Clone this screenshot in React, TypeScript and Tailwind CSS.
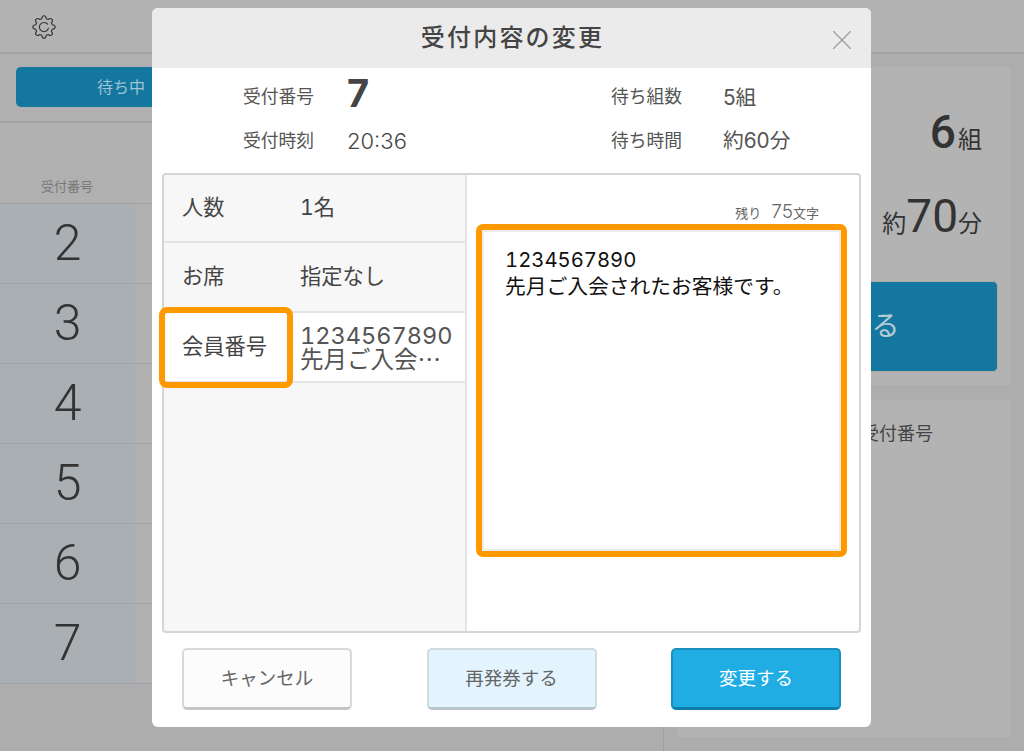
import { X } from "lucide-react";

const waiting = ["2", "3", "4", "5", "6", "7"];
const sans = "font-['Inter','Noto_Sans_CJK_JP',sans-serif]";
const roboto = "font-['Roboto','Noto_Sans_CJK_JP',sans-serif]";

// 8-tooth outline for the settings gear
const gearPath = Array.from({ length: 8 }, (_, i) => {
  const a = (i * Math.PI) / 4;
  const pt = (r: number, d: number) =>
    `${(12 + r * Math.sin(a + d)).toFixed(2)} ${(12 - r * Math.cos(a + d)).toFixed(2)}`;
  return `${i === 0 ? "M" : "L"}${pt(8.6, -0.26)} Q${pt(11.4, -0.16)} ${pt(11.2, 0)} Q${pt(11.4, 0.16)} ${pt(8.6, 0.26)}`;
}).join(" ") + " Z";

function GearIcon() {
  return (
    <svg width="24" height="24" viewBox="0 0 24 24" fill="none" stroke="#333" strokeWidth="1.1" strokeLinejoin="round">
      <path d={gearPath} />
      <path d="M15.6 9.2A4.6 4.6 0 1 0 16.4 13.4" strokeLinecap="round" />
    </svg>
  );
}

function InfoItem({ label, children }: { label: string; children: React.ReactNode }) {
  return (
    <div className="flex items-center">
      <span className="w-[104px] text-[17.75px] text-[#555]">{label}</span>
      {children}
    </div>
  );
}

function Row({ label, value, className }: { label: string; value: React.ReactNode; className: string }) {
  return (
    <div className={`flex items-center border-b-2 border-[#e4e4e4] pl-[18px] text-[21.25px] text-[#444] tabular-nums ${className}`}>
      <span className="w-[118px]">{label}</span>
      <span className="flex-1">{value}</span>
    </div>
  );
}

function Button({ className, children }: { className: string; children: React.ReactNode }) {
  return (
    <button className={`w-[170px] h-[62px] rounded-[5px] text-[18.5px] border-2 border-b-[3px] ${className}`}>
      {children}
    </button>
  );
}

export default function App() {
  return (
    <div className={`relative w-[1024px] h-[751px] overflow-hidden bg-[#adadad] text-[#333] ${sans}`}>
      <header className="h-[54px] flex items-center pl-[32px] pt-[2px] bg-[#b3b3b3] border-b-2 border-[#a3a3a3]">
        <GearIcon />
      </header>
      <div className="flex h-[697px]">
        <section className="w-[664px] border-r border-[#a0a0a0]">
          <div className="h-[69px] pl-4 pt-[13px] bg-[#b0b0b0] border-b-2 border-[#a3a3a3]">
            <div className="w-[280px] h-10 rounded-l-[5px] bg-[#14779f] pl-[81px] flex items-center text-[16px] text-[#9fc4d4]">待ち中</div>
          </div>
          <div className="h-[81px] flex items-end pb-[7px] pl-[41px] text-[13px] text-[#777] bg-[#b0b0b0] border-b border-[#a3a3a3]">受付番号</div>
          {waiting.map((n) => (
            <div key={n} className="h-20 bg-[#b0b0b0] border-b border-[#a0a3a7]">
              <div className={`w-[135px] h-full bg-[#a9afb3] flex items-center justify-center text-[50px] font-light text-[#333] ${roboto}`}>{n}</div>
            </div>
          ))}
        </section>
        <section className="flex-1 pl-[13px] pt-[13px]">
          <div className={`w-[334px] h-[318px] rounded-[4px] bg-[#b3b3b3] pr-[13px] pt-[31px] flex flex-col items-end ${roboto}`}>
            <div className="h-[84px] pr-[16px] flex items-baseline font-medium text-[#333]"><span className="text-[46px]">6</span><span className="text-[24px] font-normal ml-[2px]">組</span></div>
            <div className="h-[62px] pr-[16px] flex items-baseline text-[#333]"><span className="text-[24px]">約</span><span className="text-[46px] font-normal">70</span><span className="text-[24px]">分</span></div>
            <div className="mt-[37px] w-[309px] h-[91px] rounded-[5px] bg-[#14779f] border border-[#b0aaa5] flex items-center justify-center text-[28px] text-[#b5ccd6]">受付する</div>
          </div>
          <div className="w-[334px] h-[337px] mt-[15px] rounded-[4px] bg-[#b3b3b3] pl-[184px] pt-[20px] text-[18px] text-[#444]">受付番号</div>
        </section>
      </div>

      <div className="absolute left-[152px] top-[8px] w-[719px] h-[719px] rounded-[6px] bg-white flex flex-col">
        <div className="relative h-[60px] shrink-0 rounded-t-[6px] bg-[#ebebeb] pl-[2px] flex items-center justify-center text-[24px] font-medium tracking-[2.2px] text-[#444]">
          受付内容の変更
          <X size={34} strokeWidth={0.8} className="absolute right-[12px] top-[15px] text-[#999]" />
        </div>
        <div className="h-[105px] shrink-0 grid grid-cols-[368px_1fr] grid-rows-[47px_40px] pl-[91px] pt-[6px] items-center">
          <InfoItem label="受付番号"><span className="-mt-[9px] text-[38px] font-bold leading-none text-[#444]">7</span></InfoItem>
          <InfoItem label="待ち組数"><span className="ml-[8px] text-[20.75px] text-[#555]">5組</span></InfoItem>
          <InfoItem label="受付時刻"><span className="text-[22px] font-light text-[#444]">20:36</span></InfoItem>
          <InfoItem label="待ち時間"><span className="ml-[8px] text-[20.75px] text-[#555]">約60分</span></InfoItem>
        </div>
        <div className="relative mx-[10px] h-[460px] shrink-0 flex rounded-[4px] border-2 border-[#d5d5d5]">
          <div className="w-[303px] bg-[#f7f7f7] border-r-2 border-[#e4e4e4] rounded-l-[3px]">
            <Row className="h-[68px]" label="人数" value="1名" />
            <Row className="h-[70px]" label="お席" value="指定なし" />
            <Row
              className="h-[70px] bg-white"
              label="会員番号"
              value={
                <span className="block text-[23.5px] leading-[23px] text-[#555] whitespace-nowrap">
                  1234567890<br />先月ご入会<span className="font-['Noto_Sans_CJK_JP']">…</span>
                </span>
              }
            />
          </div>
          <div className="flex-1 pl-[9px] pr-[12px] pt-[23px]">
            <div className="h-[26px] flex items-baseline justify-end pr-[28px] text-[13px] text-[#666]">
              残り<span className="ml-[10px] text-[19px] font-light">75</span>文字
            </div>
            <div className="h-[333px] rounded-[7px] border-[6px] border-[#ff9900] bg-white">
              <div className="h-full rounded-[3px] border-2 border-[#ececec] pl-[21px] pt-[14px] text-[20.75px] leading-[27px] text-[#111] tabular-nums">
                <span className="text-[20.25px]">1234567890</span><br />先月ご入会されたお客様です。
              </div>
            </div>
          </div>
          <div className="absolute left-[-5px] top-[132px] w-[134px] h-[81px] rounded-[8px] border-[6px] border-[#ff9900]" />
        </div>
        <div className="flex justify-between px-[30px] pt-[15px]">
          <Button className="bg-[#fcfcfc] border-[#dadada] border-b-[#c6c6c6] text-[#666]">キャンセル</Button>
          <Button className="bg-[#e3f4fe] border-[#d0dae1] border-b-[#b9c5cd] text-[#666]">再発券する</Button>
          <Button className="bg-[#1fade4] border-[#1a8fc0] border-b-[#0f7cab] text-white">変更する</Button>
        </div>
      </div>
    </div>
  );
}
